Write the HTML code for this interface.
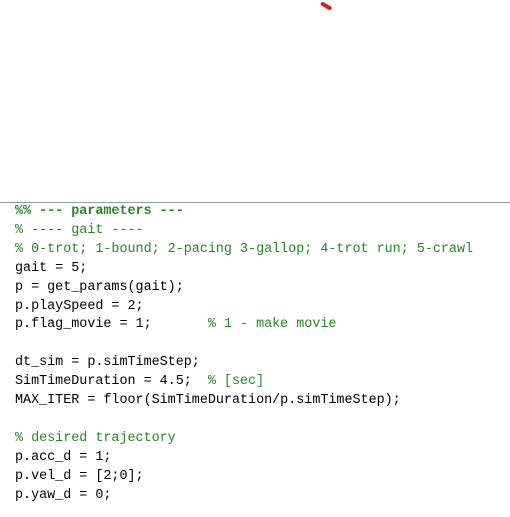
<!DOCTYPE html>
<html><head><meta charset="utf-8"><style>
html,body{margin:0;padding:0;background:#fff;width:510px;height:517px;overflow:hidden;position:relative}
.hr{position:absolute;left:0;top:202px;width:510px;height:1px;background:#8e9aa6}
pre{position:absolute;left:15px;top:203px;margin:0;font-family:"Liberation Mono",monospace;font-size:13.4px;line-height:18.9px;color:#000}
.c{color:#228b22}
.b{font-weight:bold}
.red{position:absolute;left:321px;top:1px;width:12px;height:4px;background:#e31b1b;border-radius:3px;transform:rotate(30deg);transform-origin:left center}
</style></head><body>
<div class="red"></div>
<div class="hr"></div>
<pre><span class="c b">%% --- parameters ---</span>
<span class="c">% ---- gait ----</span>
<span class="c">% 0-trot; 1-bound; 2-pacing 3-gallop; 4-trot run; 5-crawl</span>
gait = 5;
p = get_params(gait);
p.playSpeed = 2;
p.flag_movie = 1;       <span class="c">% 1 - make movie</span>

dt_sim = p.simTimeStep;
SimTimeDuration = 4.5;  <span class="c">% [sec]</span>
MAX_ITER = floor(SimTimeDuration/p.simTimeStep);

<span class="c">% desired trajectory</span>
p.acc_d = 1;
p.vel_d = [2;0];
p.yaw_d = 0;
</pre>
</body></html>
